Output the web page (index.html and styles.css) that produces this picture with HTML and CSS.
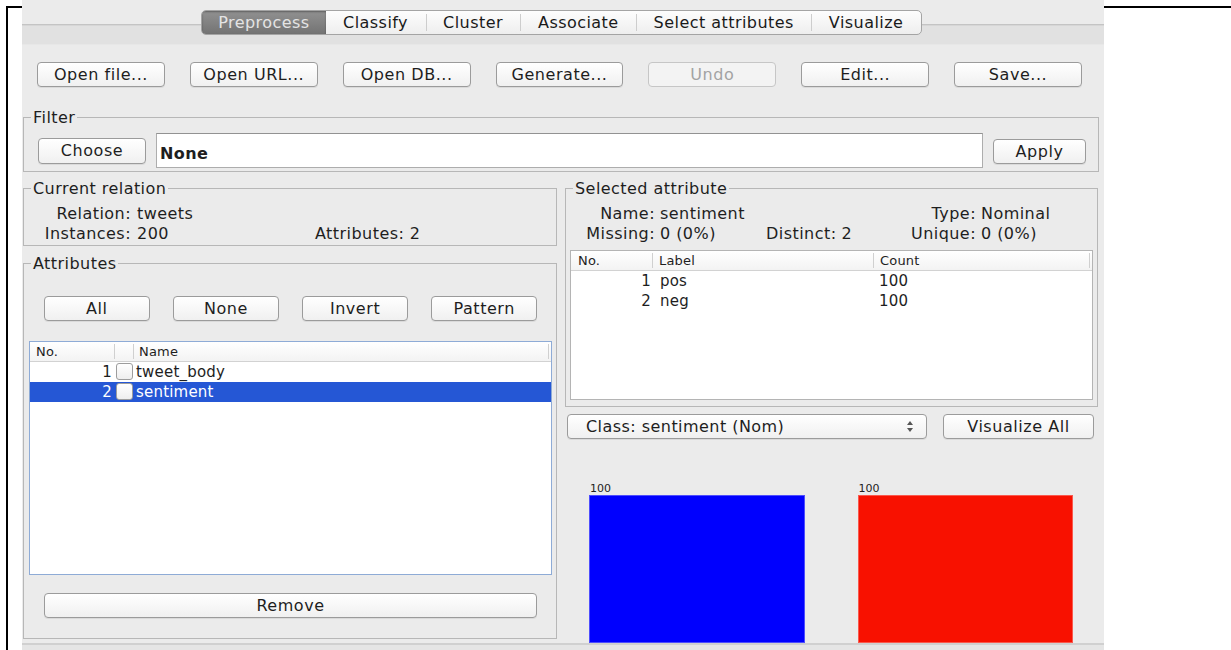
FILE: index.html
```html
<!DOCTYPE html>
<html lang="en">
<head>
<meta charset="utf-8">
<title>Weka Explorer</title>
<link rel="stylesheet" href="styles.css">
</head>
<body>
<div class="doc">
  <div class="window">
    <div class="tabstrip">
      <div class="tabs">
        <div class="tab active">Preprocess</div>
        <div class="tab">Classify</div>
        <div class="tab">Cluster</div>
        <div class="tab">Associate</div>
        <div class="tab">Select attributes</div>
        <div class="tab">Visualize</div>
      </div>
    </div>

    <div class="toolbar">
      <button class="btn">Open file...</button>
      <button class="btn">Open URL...</button>
      <button class="btn">Open DB...</button>
      <button class="btn">Generate...</button>
      <button class="btn" disabled>Undo</button>
      <button class="btn">Edit...</button>
      <button class="btn">Save...</button>
    </div>

    <fieldset class="group filter">
      <legend>Filter</legend>
      <div class="filter-row">
        <button class="btn choose">Choose</button>
        <div class="field">None</div>
        <button class="btn apply">Apply</button>
      </div>
    </fieldset>

    <div class="main">
      <div class="col">
        <fieldset class="group relation">
          <legend>Current relation</legend>
          <div class="rel-grid">
            <span class="lbl">Relation:</span><span class="span2">tweets</span>
            <span class="lbl">Instances:</span><span>200</span><span>Attributes: 2</span>
          </div>
        </fieldset>

        <fieldset class="group attributes">
          <legend>Attributes</legend>
          <div class="attr-body">
            <div class="sel-buttons">
              <button class="btn">All</button>
              <button class="btn">None</button>
              <button class="btn">Invert</button>
              <button class="btn">Pattern</button>
            </div>
            <div class="table focused">
              <div class="thead attr-cols">
                <div class="th">No.</div>
                <div class="th"></div>
                <div class="th last">Name</div>
              </div>
              <div class="tr attr-cols">
                <div class="td num">1</div>
                <div class="td"><span class="check"></span></div>
                <div class="td name">tweet_body</div>
              </div>
              <div class="tr attr-cols selected">
                <div class="td num">2</div>
                <div class="td"><span class="check"></span></div>
                <div class="td name">sentiment</div>
              </div>
            </div>
            <button class="btn remove">Remove</button>
          </div>
        </fieldset>
      </div>

      <div class="col">
        <fieldset class="group selected-attr">
          <legend>Selected attribute</legend>
          <div class="info-grid">
            <span class="lbl">Name:</span><span class="span3">sentiment</span><span class="lbl">Type:</span><span>Nominal</span>
            <span class="lbl">Missing:</span><span>0 (0%)</span><span>Distinct:</span><span>2</span><span class="lbl">Unique:</span><span>0 (0%)</span>
          </div>
          <div class="table labels">
            <div class="thead label-cols">
              <div class="th">No.</div>
              <div class="th">Label</div>
              <div class="th last">Count</div>
            </div>
            <div class="tr label-cols">
              <div class="td num">1</div>
              <div class="td lab">pos</div>
              <div class="td cnt">100</div>
            </div>
            <div class="tr label-cols">
              <div class="td num">2</div>
              <div class="td lab">neg</div>
              <div class="td cnt">100</div>
            </div>
          </div>
        </fieldset>

        <div class="class-row">
          <div class="combo">
            <span>Class: sentiment (Nom)</span>
            <svg class="updown" width="8" height="13" viewBox="0 0 8 13">
              <path d="M4 1 L7 5 L1 5 Z" fill="#555"/>
              <path d="M1 8 L7 8 L4 12 Z" fill="#555"/>
            </svg>
          </div>
          <button class="btn vis-all">Visualize All</button>
        </div>

        <div class="histogram">
          <div class="bin">
            <span class="count">100</span>
            <div class="bar blue" style="height:148px"></div>
          </div>
          <div class="bin">
            <span class="count">100</span>
            <div class="bar red" style="height:148px"></div>
          </div>
        </div>
      </div>
    </div>

    <div class="statusbar"></div>
  </div>
</div>
</body>
</html>
```

FILE: styles.css
```css
* {
  box-sizing: border-box;
}

html,
body {
  margin: 0;
  background: #ffffff;
  overflow: hidden;
}

body {
  font-family: "DejaVu Sans", "Liberation Sans", sans-serif;
  font-size: 16px;
  letter-spacing: 0.45px;
  color: #1e1e1e;
}

/* table cell lines around the embedded window */
.doc {
  margin: 6px 0 0 6px;
  height: 660px;
  border-top: 2px solid #000;
  border-left: 2px solid #000;
}

.window {
  margin: -8px 0 0 14px;
  width: 1082px;
  height: 660px;
  background: #ebebeb;
}

/* ---------- tab strip ---------- */
.tabstrip {
  height: 45px;
  padding: 10px 3px 0 0;
  display: flex;
  justify-content: center;
  align-items: flex-start;
  background: linear-gradient(#ebebeb 0 24px, #c4c4c4 24px 25px, #d6d6d6 25px 26px, #e1e1e1 26px 44px, #e7e7e7 44px 45px);
}

.tabs {
  display: flex;
  height: 25px;
  border: 1px solid #a4a4a4;
  border-radius: 5px;
  overflow: hidden;
  background: linear-gradient(#fdfdfd, #eeeeee);
}

.tab {
  padding: 0 17.5px;
  line-height: 23px;
  color: #1a1a1a;
}

.tab + .tab {
  background: linear-gradient(#cdcdcd, #cdcdcd) left center / 1px 17px no-repeat;
}

.tab.active {
  padding: 0 16px;
  background: linear-gradient(#919191, #737373);
  color: #e4e4e4;
  box-shadow: inset 0 1px 2px rgba(0, 0, 0, 0.35);
}

.tab.active + .tab {
  background: none;
}

/* ---------- buttons ---------- */
.btn {
  height: 25px;
  padding: 0;
  border: 1px solid #9b9b9b;
  border-radius: 4px;
  background: linear-gradient(#ffffff, #f0f0f0);
  box-shadow: 0 1px 0 rgba(0, 0, 0, 0.07);
  font: inherit;
  letter-spacing: 0.55px;
  color: #1e1e1e;
}

.btn:disabled {
  border-color: #c6c6c6;
  background: #f3f3f3;
  color: #a3a3a3;
  box-shadow: none;
}

.toolbar {
  display: grid;
  grid-template-columns: repeat(7, 1fr);
  column-gap: 25px;
  margin-top: 17px;
  padding: 0 22px 0 15px;
}

/* ---------- titled groups ---------- */
.group {
  margin: 0;
  padding: 0;
  min-inline-size: 0;
  border: 1px solid #b7b7b7;
}

.group legend {
  margin-left: 7px;
  padding: 0 2px;
  line-height: 18px;
  transform: translateY(1px);
}

.filter {
  margin: 21px 5px 0 1px;
  padding: 7px 0 3px 0;
}

.filter-row {
  display: flex;
  align-items: center;
  gap: 10px;
  padding: 0 12px 0 14px;
}

.choose {
  width: 108px;
  height: 26px;
}

.apply {
  width: 93px;
  margin-top: 1px;
}

.field {
  flex: 1;
  height: 35px;
  padding: 7px 0 0 3px;
  background: #ffffff;
  border: 1px solid #adadad;
  border-top-color: #929292;
  font-weight: bold;
  line-height: 26px;
}

/* ---------- two columns ---------- */
.main {
  display: grid;
  grid-template-columns: 534px 533px;
  column-gap: 8px;
  margin: 7px 0 0 1px;
}

.col {
  display: flex;
  flex-direction: column;
}

.relation {
  padding: 7px 0 1px 0;
}

.rel-grid {
  display: grid;
  grid-template-columns: 107px 172px auto;
  column-gap: 6px;
  line-height: 20px;
}

.lbl {
  text-align: right;
}

.span2 {
  grid-column: span 2;
}

.span3 {
  grid-column: span 3;
}

.attributes {
  margin-top: 8px;
  padding: 24px 0 20px 0;
}

.attr-body {
  display: flex;
  flex-direction: column;
  padding: 0 19px 0 20px;
}

.sel-buttons {
  display: grid;
  grid-template-columns: repeat(4, 1fr);
  column-gap: 23.5px;
}

/* ---------- tables ---------- */
.table {
  background: #ffffff;
  border: 1px solid #b4b4b4;
  font-size: 15px;
  letter-spacing: 0.2px;
}

.table.focused {
  margin: 20px -15px 0 -15px;
  height: 234px;
  border-color: #8eabd6;
}

.thead {
  height: 20px;
  background: linear-gradient(#ffffff, #f3f3f3);
  border-bottom: 1px solid #d2d2d2;
  font-size: 13px;
  line-height: 19px;
}

.th + .th {
  border-left: 1px solid #d0d0d0;
  margin: 2px 0;
  line-height: 15px;
}

.th.last {
  margin-right: 2px;
  border-right: 1px solid #d0d0d0;
}

.tr {
  height: 20px;
  line-height: 20px;
}

.attr-cols {
  display: grid;
  grid-template-columns: 84px 19px 1fr;
}

.attr-cols .th:first-child {
  padding-left: 6px;
}

.attr-cols .th.last {
  padding-left: 5px;
}

.num {
  text-align: right;
  padding-right: 2px;
}

.check {
  display: block;
  width: 17px;
  height: 17px;
  margin: 1px 0 0 2px;
  border: 1px solid #9d9d9d;
  border-radius: 3px;
  background: linear-gradient(#ffffff, #eeeeee);
}

.name {
  padding-left: 3px;
}

.selected {
  background: #2557d5;
  color: #ffffff;
}

.remove {
  margin-top: 18px;
}

/* selected attribute */
.selected-attr {
  padding: 7px 0 6px 0;
}

.info-grid {
  display: grid;
  grid-template-columns: 85px 101px auto auto 1fr 112px;
  column-gap: 5px;
  margin: 0 4px;
  line-height: 20px;
}

.table.labels {
  margin: 6px 4px 0 4px;
  height: 150px;
}

.label-cols {
  display: grid;
  grid-template-columns: 81px 221px 1fr;
}

.label-cols .th:first-child {
  padding-left: 7px;
}

.label-cols .th + .th {
  padding-left: 6px;
}

.label-cols .num {
  padding-right: 1px;
}

.lab {
  padding-left: 8px;
}

.cnt {
  padding-left: 6px;
}

/* class selector row */
.class-row {
  display: flex;
  gap: 16px;
  margin-top: 7px;
  padding: 0 4px 0 2px;
}

.combo {
  width: 360px;
  height: 25px;
  display: flex;
  align-items: center;
  padding: 0 12px 0 18px;
  border: 1px solid #9b9b9b;
  border-radius: 4px;
  background: linear-gradient(#ffffff, #f0f0f0);
  box-shadow: 0 1px 0 rgba(0, 0, 0, 0.07);
}

.updown {
  margin-left: auto;
}

.vis-all {
  flex: 1;
}

/* histogram */
.histogram {
  height: 204px;
  display: grid;
  grid-template-columns: 1fr 1fr;
  column-gap: 53px;
  align-items: end;
  padding: 0 25px 0 24px;
}

.bin {
  display: flex;
  flex-direction: column;
}

.count {
  padding-left: 1px;
  font-size: 11px;
  letter-spacing: 0;
  line-height: 13px;
}

.bar {
  border: 1px solid rgba(255, 255, 255, 0.3);
}

.bar.blue {
  background: #0000fe;
}

.bar.red {
  background: #f81100;
}

.statusbar {
  height: 30px;
  border-top: 2px solid #d0d0d0;
  background: #e5e5e5;
}
```
